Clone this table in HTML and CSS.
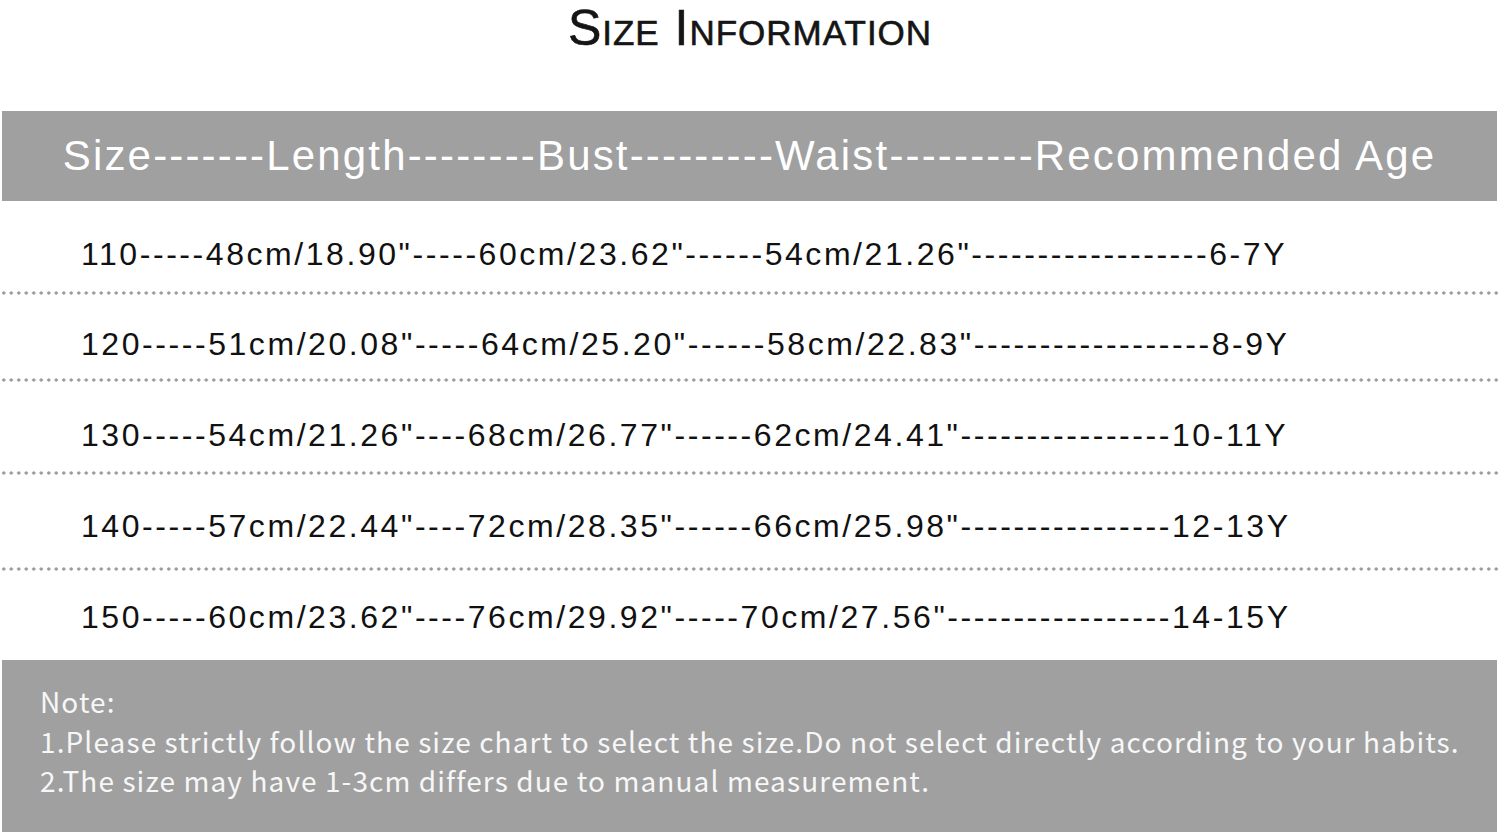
FILE: index.html
```html
<!DOCTYPE html>
<html lang="en">
<head>
<meta charset="utf-8">
<title>Size Information</title>
<link rel="stylesheet" href="styles.css">
</head>
<body>
<div class="page">
  <h1 class="title">Size Information</h1>
  <div class="band head">Size-------Length--------Bust---------Waist---------Recommended Age</div>
  <div class="rows">
    <div class="row r1"><span class="cells">110-----48cm/18.90"-----60cm/23.62"------54cm/21.26"------------------6-7Y</span></div>
    <div class="row r2"><span class="cells">120-----51cm/20.08"-----64cm/25.20"------58cm/22.83"------------------8-9Y</span></div>
    <div class="row r3"><span class="cells">130-----54cm/21.26"----68cm/26.77"------62cm/24.41"----------------10-11Y</span></div>
    <div class="row r4"><span class="cells">140-----57cm/22.44"----72cm/28.35"------66cm/25.98"----------------12-13Y</span></div>
    <div class="row r5 last"><span class="cells">150-----60cm/23.62"----76cm/29.92"-----70cm/27.56"-----------------14-15Y</span></div>
  </div>
  <div class="band note">
    <p class="note-line">Note:</p>
    <p class="note-line">1.Please strictly follow the size chart to select the size.Do not select directly according to your habits.</p>
    <p class="note-line">2.The size may have 1-3cm differs due to manual measurement.</p>
  </div>
</div>
</body>
</html>
```
FILE: styles.css
```css
html, body {
  margin: 0;
  padding: 0;
  background: #ffffff;
}
.page {
  width: 1500px;
  height: 835px;
  overflow: hidden;
  display: flex;
  flex-direction: column;
}
.title {
  margin: 0;
  height: 111px;
  font-family: "Liberation Sans", Arial, sans-serif;
  font-weight: normal;
  font-variant: small-caps;
  font-size: 50px;
  line-height: 56px;
  letter-spacing: 1px;
  color: #151515;
  text-align: center;
  -webkit-text-stroke: 0.6px #151515;
}
.band {
  background: #a0a0a0;
  margin: 0 3px 0 2px;
  color: #ffffff;
}
.head {
  height: 90px;
  display: flex;
  align-items: center;
  justify-content: center;
  font-family: "Liberation Sans", Arial, sans-serif;
  font-size: 42px;
  letter-spacing: 2.17px;
  line-height: 1;
}
.rows {
  display: flex;
  flex-direction: column;
}
.row {
  font-family: "Liberation Sans", Arial, sans-serif;
  font-size: 32px;
  line-height: 36px;
  letter-spacing: 2.56px;
  color: #111111;
  padding-left: 81px;
  white-space: nowrap;
}
.row::after {
  content: "";
  display: block;
  height: 4px;
  margin-left: -81px;
  width: 1500px;
  background-image: radial-gradient(circle, #999999 1.3px, rgba(153,153,153,0) 2px);
  background-size: 7.5px 4px;
  background-repeat: repeat-x;
  background-position: 0 0;
}
.cells { display: block; }
.r1 { padding-top: 35px; }
.r1 .cells { margin-bottom: 19px; }
.r2 { padding-top: 31px; }
.r2 .cells { margin-bottom: 16px; }
.r3 { padding-top: 35px; }
.r3 .cells { margin-bottom: 18px; }
.r4 { padding-top: 33px; }
.r4 .cells { margin-bottom: 23px; }
.r5 { padding-top: 28px; }
.r5 .cells { margin-bottom: 25px; }
.row.last::after { display: none; }
.note {
  flex: 1;
  margin-bottom: 3px;
  padding: 22px 0 0 38px;
  font-family: "Noto Sans CJK SC", "Noto Sans", sans-serif;
  font-size: 28px;
  line-height: 39.5px;
  letter-spacing: 1.1px;
  color: #f7f7f7;
}
.note-line {
  margin: 0;
  white-space: nowrap;
}
```
